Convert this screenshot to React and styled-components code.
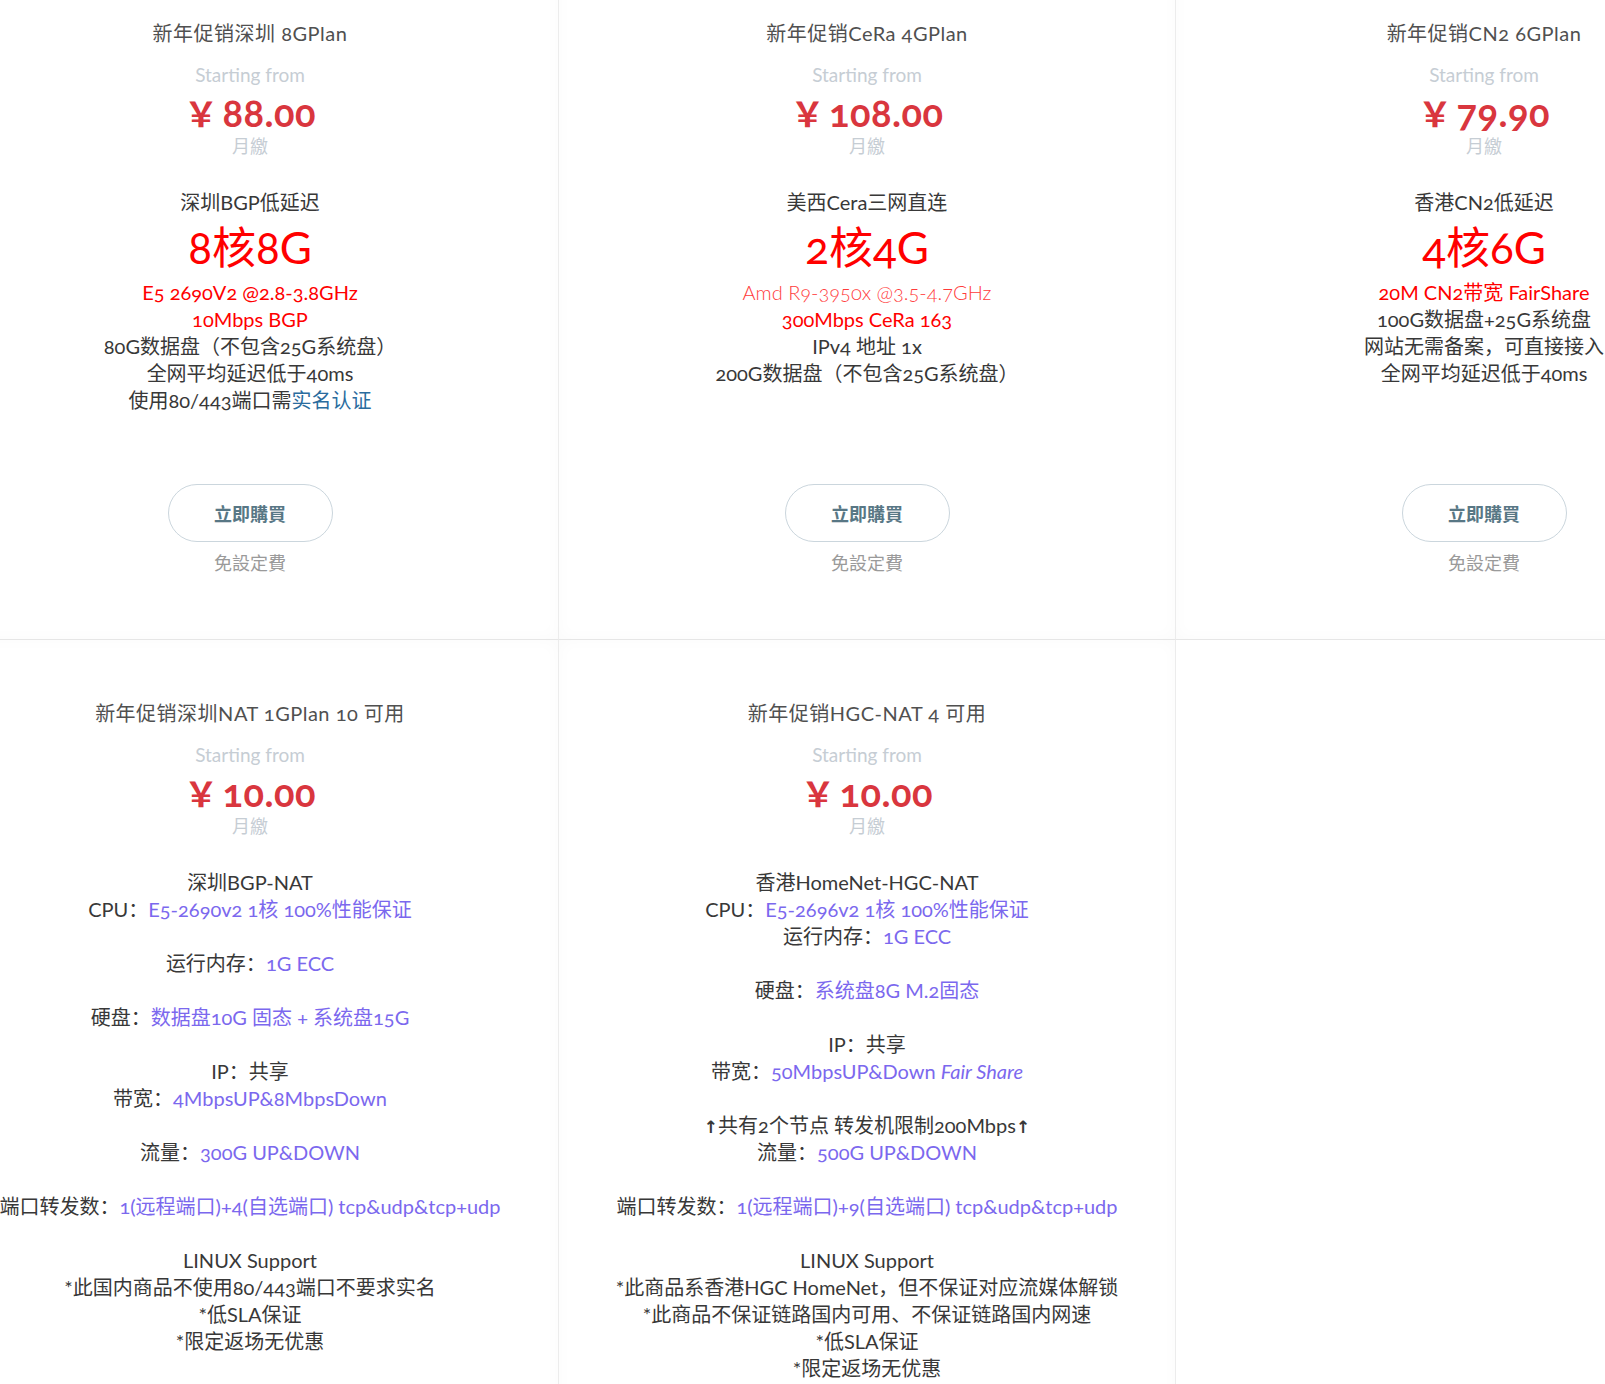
import styled, { createGlobalStyle } from 'styled-components';

const GlobalStyle = createGlobalStyle`
  html, body {
    margin: 0;
    padding: 0;
    background: #ffffff;
  }
  body {
    overflow: hidden;
    font-family: Lato, "Noto Sans CJK SC", sans-serif;
    font-variant-numeric: oldstyle-nums;
  }
`;

const plans = [
  {
    title: '新年促销深圳 8GPlan',
    price: '88.00',
    buy: true,
    features: [
      { text: '深圳BGP低延迟' },
      { text: '8核8G', kind: 'big' },
      { text: 'E5 2690V2 @2.8-3.8GHz', kind: 'red' },
      { text: '10Mbps BGP', kind: 'red' },
      { text: '80G数据盘（不包含25G系统盘）' },
      { text: '全网平均延迟低于40ms' },
      { text: '使用80/443端口需', link: '实名认证' },
    ],
  },
  {
    title: '新年促销CeRa 4GPlan',
    price: '108.00',
    buy: true,
    features: [
      { text: '美西Cera三网直连' },
      { text: '2核4G', kind: 'big' },
      { text: 'Amd R9-3950x @3.5-4.7GHz', kind: 'light' },
      { text: '300Mbps CeRa 163', kind: 'red' },
      { text: 'IPv4 地址 1x' },
      { text: '200G数据盘（不包含25G系统盘）' },
    ],
  },
  {
    title: '新年促销CN2 6GPlan',
    price: '79.90',
    buy: true,
    features: [
      { text: '香港CN2低延迟' },
      { text: '4核6G', kind: 'big' },
      { text: '20M CN2带宽 FairShare', kind: 'red' },
      { text: '100G数据盘+25G系统盘' },
      { text: '网站无需备案，可直接接入' },
      { text: '全网平均延迟低于40ms' },
    ],
  },
  {
    title: '新年促销深圳NAT 1GPlan 10 可用',
    price: '10.00',
    features: [
      { text: '深圳BGP-NAT' },
      { text: 'CPU：', value: 'E5-2690v2 1核 100%性能保证' },
      { blank: true },
      { text: '运行内存：', value: '1G ECC' },
      { blank: true },
      { text: '硬盘：', value: '数据盘10G 固态 + 系统盘15G' },
      { blank: true },
      { text: 'IP：共享' },
      { text: '带宽：', value: '4MbpsUP&8MbpsDown' },
      { blank: true },
      { text: '流量：', value: '300G UP&DOWN' },
      { blank: true },
      { text: '端口转发数：', value: '1(远程端口)+4(自选端口) tcp&udp&tcp+udp' },
      { blank: true },
      { text: 'LINUX Support' },
      { text: '*此国内商品不使用80/443端口不要求实名' },
      { text: '*低SLA保证' },
      { text: '*限定返场无优惠' },
    ],
  },
  {
    title: '新年促销HGC-NAT 4 可用',
    price: '10.00',
    features: [
      { text: '香港HomeNet-HGC-NAT' },
      { text: 'CPU：', value: 'E5-2696v2 1核 100%性能保证' },
      { text: '运行内存：', value: '1G ECC' },
      { blank: true },
      { text: '硬盘：', value: '系统盘8G M.2固态' },
      { blank: true },
      { text: 'IP：共享' },
      { text: '带宽：', value: '50MbpsUP&Down ', italic: 'Fair Share' },
      { blank: true },
      { text: '共有2个节点 转发机限制200Mbps', arrows: true },
      { text: '流量：', value: '500G UP&DOWN' },
      { blank: true },
      { text: '端口转发数：', value: '1(远程端口)+9(自选端口) tcp&udp&tcp+udp' },
      { blank: true },
      { text: 'LINUX Support' },
      { text: '*此商品系香港HGC HomeNet，但不保证对应流媒体解锁' },
      { text: '*此商品不保证链路国内可用、不保证链路国内网速' },
      { text: '*低SLA保证' },
      { text: '*限定返场无优惠' },
    ],
  },
];

function Feature({ item }) {
  if (item.blank) return <Blank />;
  if (item.kind === 'big') return <BigLine>{item.text}</BigLine>;
  return (
    <Line $kind={item.kind}>
      {item.arrows && <Arrow>↑</Arrow>}
      {item.text}
      {item.arrows && <Arrow>↑</Arrow>}
      {item.link && <LinkText>{item.link}</LinkText>}
      {item.value && (
        <Value>
          {item.value}
          {item.italic && <em>{item.italic}</em>}
        </Value>
      )}
    </Line>
  );
}

function PlanCard({ plan }) {
  return (
    <Card>
      <Title>{plan.title}</Title>
      <Starting>Starting from</Starting>
      <Price>
        <Yen>￥</Yen>
        {plan.price}
      </Price>
      <Period>月繳</Period>
      <Features>
        {plan.features.map((item, i) => (
          <Feature key={i} item={item} />
        ))}
      </Features>
      {plan.buy && (
        <Footer>
          <BuyButton type="button">立即購買</BuyButton>
          <SetupNote>免設定費</SetupNote>
        </Footer>
      )}
    </Card>
  );
}

export default function App() {
  return (
    <Page>
      <GlobalStyle />
      <Grid>
        {plans.map((plan) => (
          <PlanCard key={plan.title} plan={plan} />
        ))}
      </Grid>
    </Page>
  );
}

const Page = styled.div`
  width: 1605px;
  height: 1384px;
  overflow: hidden;
  background: #ffffff;
`;

const Grid = styled.div`
  display: grid;
  grid-template-columns: repeat(3, 617px);
  margin: -40px 0 0 -58px;
`;

const Card = styled.div`
  display: flex;
  flex-direction: column;
  align-items: center;
  padding: 60px 0 63px;
  text-align: center;
  white-space: nowrap;
  background: #ffffff;
  border-right: 1px solid #ececec;
  border-bottom: 1px solid #e6e6e6;
  box-shadow: inset 0 0 16px rgba(0, 0, 0, 0.025);
`;

const Title = styled.h3`
  margin: 0 0 14px;
  color: #505050;
  font-size: 20px;
  font-weight: 400;
  line-height: 27px;
  letter-spacing: 0.5px;
`;

const Starting = styled.div`
  color: #c6cdd4;
  font-size: 19px;
  line-height: 27px;
`;

const Price = styled.div`
  margin-top: 5px;
  color: #d9363e;
  font-size: 38px;
  font-weight: 700;
  line-height: 38px;
  letter-spacing: 0.5px;
`;

const Yen = styled.span`
  font-family: "Noto Sans CJK SC", sans-serif;
  font-size: 34px;
  margin-right: 4px;
`;

const Period = styled.div`
  margin-top: 1px;
  color: #c6cdd4;
  font-size: 18px;
  line-height: 27px;
`;

const Features = styled.div`
  display: flex;
  flex-direction: column;
  align-items: center;
  margin: 29px 0 70px;
`;

const lineColors = {
  red: '#ff0000',
  light: '#ff3b3b',
};

const Line = styled.div`
  height: 27px;
  color: ${(p) => lineColors[p.$kind] || '#383838'};
  font-size: 20px;
  font-weight: ${(p) => (p.$kind === 'light' ? 300 : 400)};
  line-height: 27px;
`;

const Blank = styled.div`
  height: 27px;
`;

const BigLine = styled.div`
  color: #ff0000;
  font-size: 44px;
  line-height: 63px;
`;

const LinkText = styled.span`
  color: #2a6c9e;
`;

const Value = styled.span`
  color: #7b68ee;

  em {
    font-style: italic;
  }
`;

const Arrow = styled.span`
  font-family: "DejaVu Sans", sans-serif;
  font-weight: 700;
  font-size: 17px;
  line-height: 0;
`;

const Footer = styled.div`
  display: flex;
  flex-direction: column;
  align-items: center;
  gap: 7px;
  margin-top: auto;
`;

const BuyButton = styled.button`
  width: 165px;
  height: 58px;
  border: 1px solid #cbd6dd;
  border-radius: 29px;
  background: #ffffff;
  color: #587785;
  font-family: "Noto Sans CJK TC", sans-serif;
  font-size: 18px;
  font-weight: 700;
  cursor: pointer;
`;

const SetupNote = styled.div`
  color: #9a9a9a;
  font-family: "Noto Sans CJK TC", sans-serif;
  font-size: 18px;
  line-height: 27px;
`;
